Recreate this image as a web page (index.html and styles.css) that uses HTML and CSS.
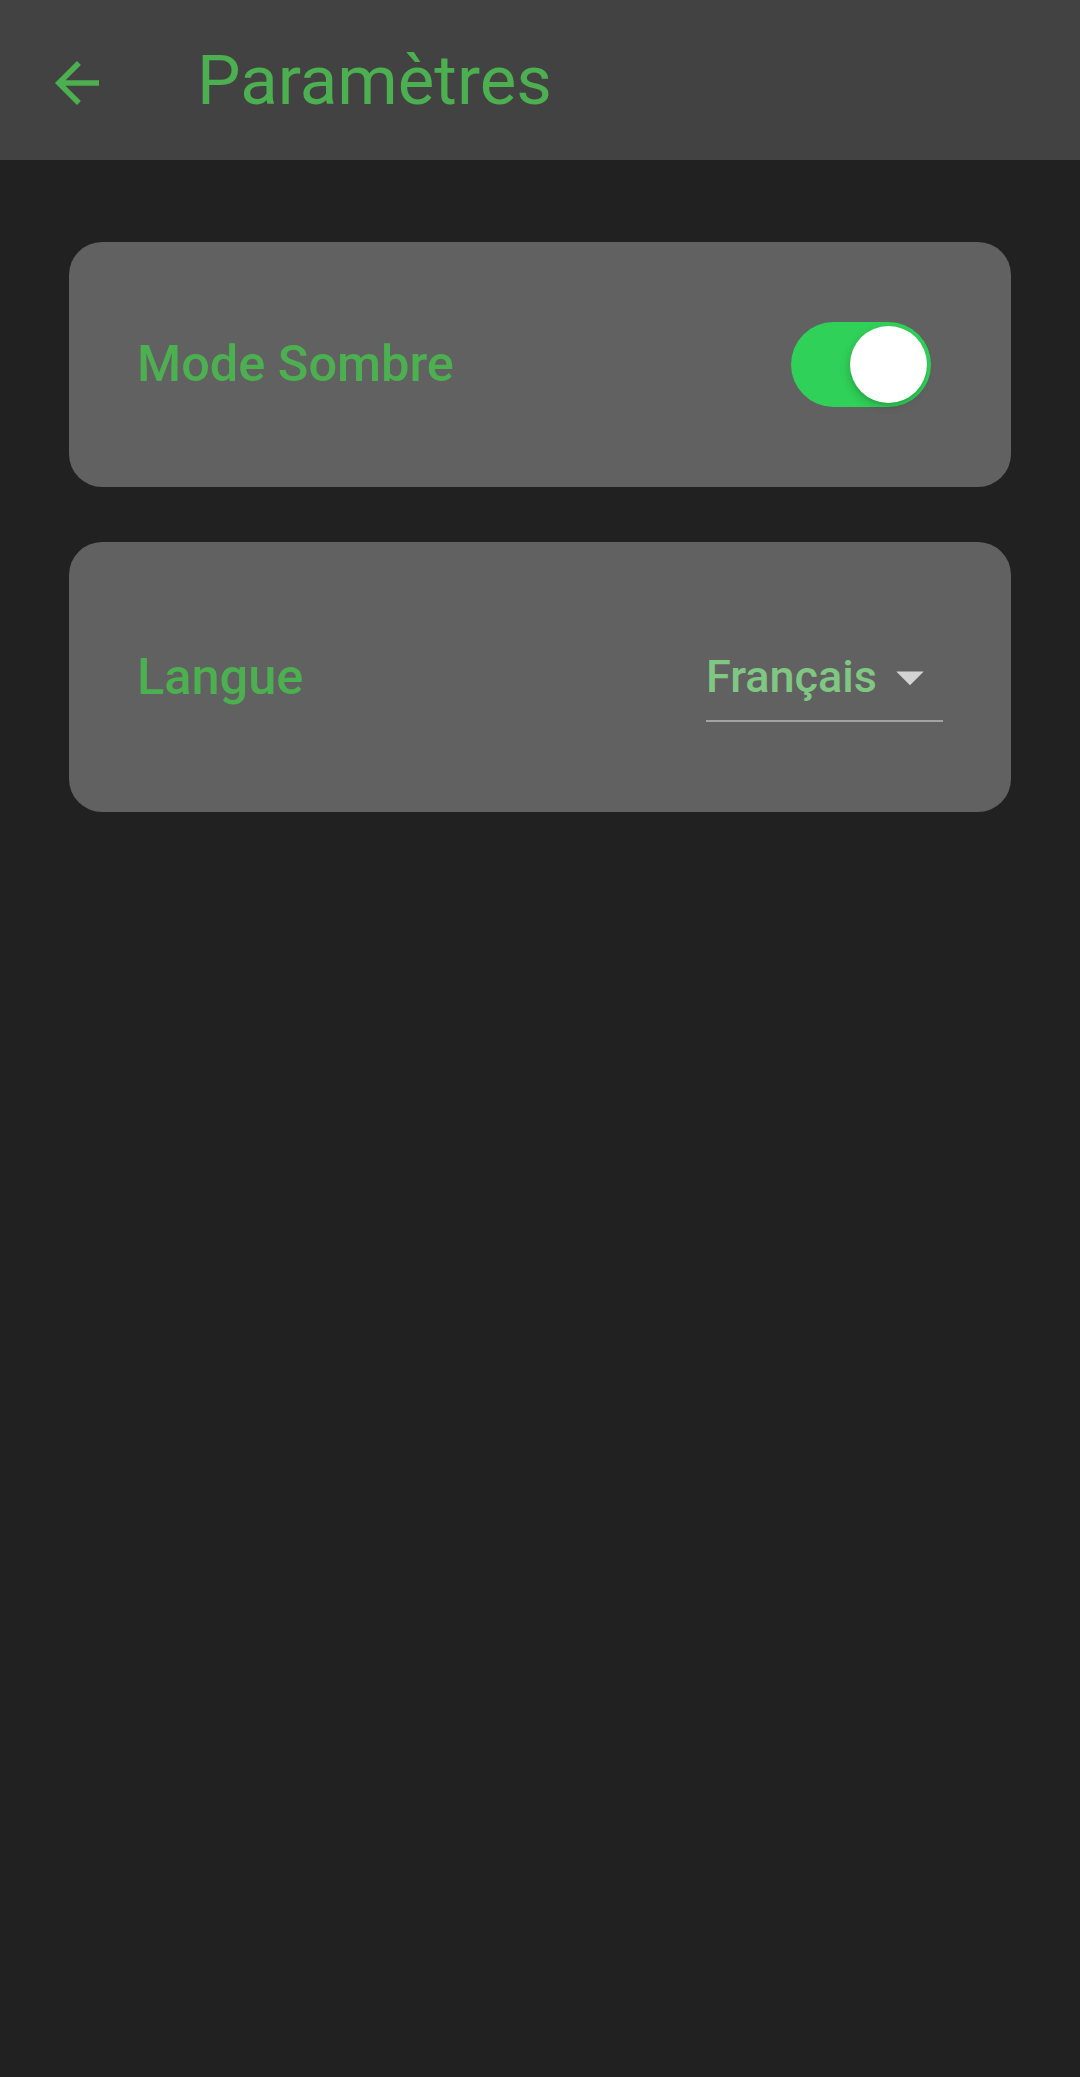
FILE: index.html
```html
<!DOCTYPE html>
<html lang="fr">
<head>
<meta charset="utf-8">
<title>Paramètres</title>
<link rel="stylesheet" href="styles.css">
</head>
<body>
<header class="appbar">
  <button class="back" aria-label="Retour">
    <svg viewBox="0 0 24 24" width="66" height="66"><path fill="#4CAF50" d="M20 11H7.83l5.59-5.59L12 4l-8 8 8 8 1.41-1.41L7.83 13H20v-2z"/></svg>
  </button>
  <h1 class="title">Paramètres</h1>
</header>
<main class="content">
  <section class="card card-theme">
    <span class="label">Mode Sombre</span>
    <span class="switch on" role="switch" aria-checked="true"><span class="thumb"></span></span>
  </section>
  <section class="card card-lang">
    <span class="label">Langue</span>
    <span class="dropdown">
      <span class="dd-value">Français</span>
      <svg class="dd-icon" viewBox="0 0 24 24" width="66" height="66"><path fill="rgba(255,255,255,0.72)" d="M7 10l5 5 5-5z"/></svg>
    </span>
  </section>
</main>
</body>
</html>
```

FILE: styles.css
```css
* { box-sizing: border-box; }
html, body {
  margin: 0;
  padding: 0;
  background: #212121;
  font-family: Roboto, "Noto Sans", "Liberation Sans", sans-serif;
}
body { min-height: 2077px; }

.appbar {
  height: 160px;
  background: #424242;
  display: flex;
  align-items: center;
}
.back {
  margin: 6px 0 0 44px;
  padding: 0;
  border: 0;
  background: none;
  width: 66px;
  height: 66px;
  display: flex;
}
.title {
  margin: 0 0 0 87px;
  font-size: 69px;
  line-height: 1;
  font-weight: 400;
  color: #4CAF50;
}

.content {
  padding: 82px 69px 0;
  display: flex;
  flex-direction: column;
  gap: 55px;
}
.card {
  background: #616161;
  border-radius: 33px;
  display: flex;
  align-items: center;
  justify-content: space-between;
  padding-left: 68px;
}
.card-theme { height: 245px; padding-right: 80px; }
.card-lang { height: 270px; padding-right: 68px; }

.label {
  font-size: 50.5px;
  line-height: 1;
  font-weight: 500;
  color: #4CAF50;
}

.switch {
  width: 140px;
  height: 85px;
  border-radius: 43px;
  background: #30D158;
  display: flex;
  align-items: center;
  justify-content: flex-end;
  padding-right: 4px;
}
.thumb {
  width: 77px;
  height: 77px;
  border-radius: 50%;
  background: #fff;
  box-shadow: -2px 4px 10px rgba(0,0,0,0.15), 0 3px 2px rgba(0,0,0,0.06);
}

.dropdown {
  display: flex;
  align-items: center;
  margin-top: 11px;
  padding-bottom: 10px;
  border-bottom: 2px solid #a3a3a3;
}
.dd-value {
  font-size: 45px;
  line-height: 1;
  font-weight: 500;
  color: #81C784;
}
.dd-icon { display: block; }
```
